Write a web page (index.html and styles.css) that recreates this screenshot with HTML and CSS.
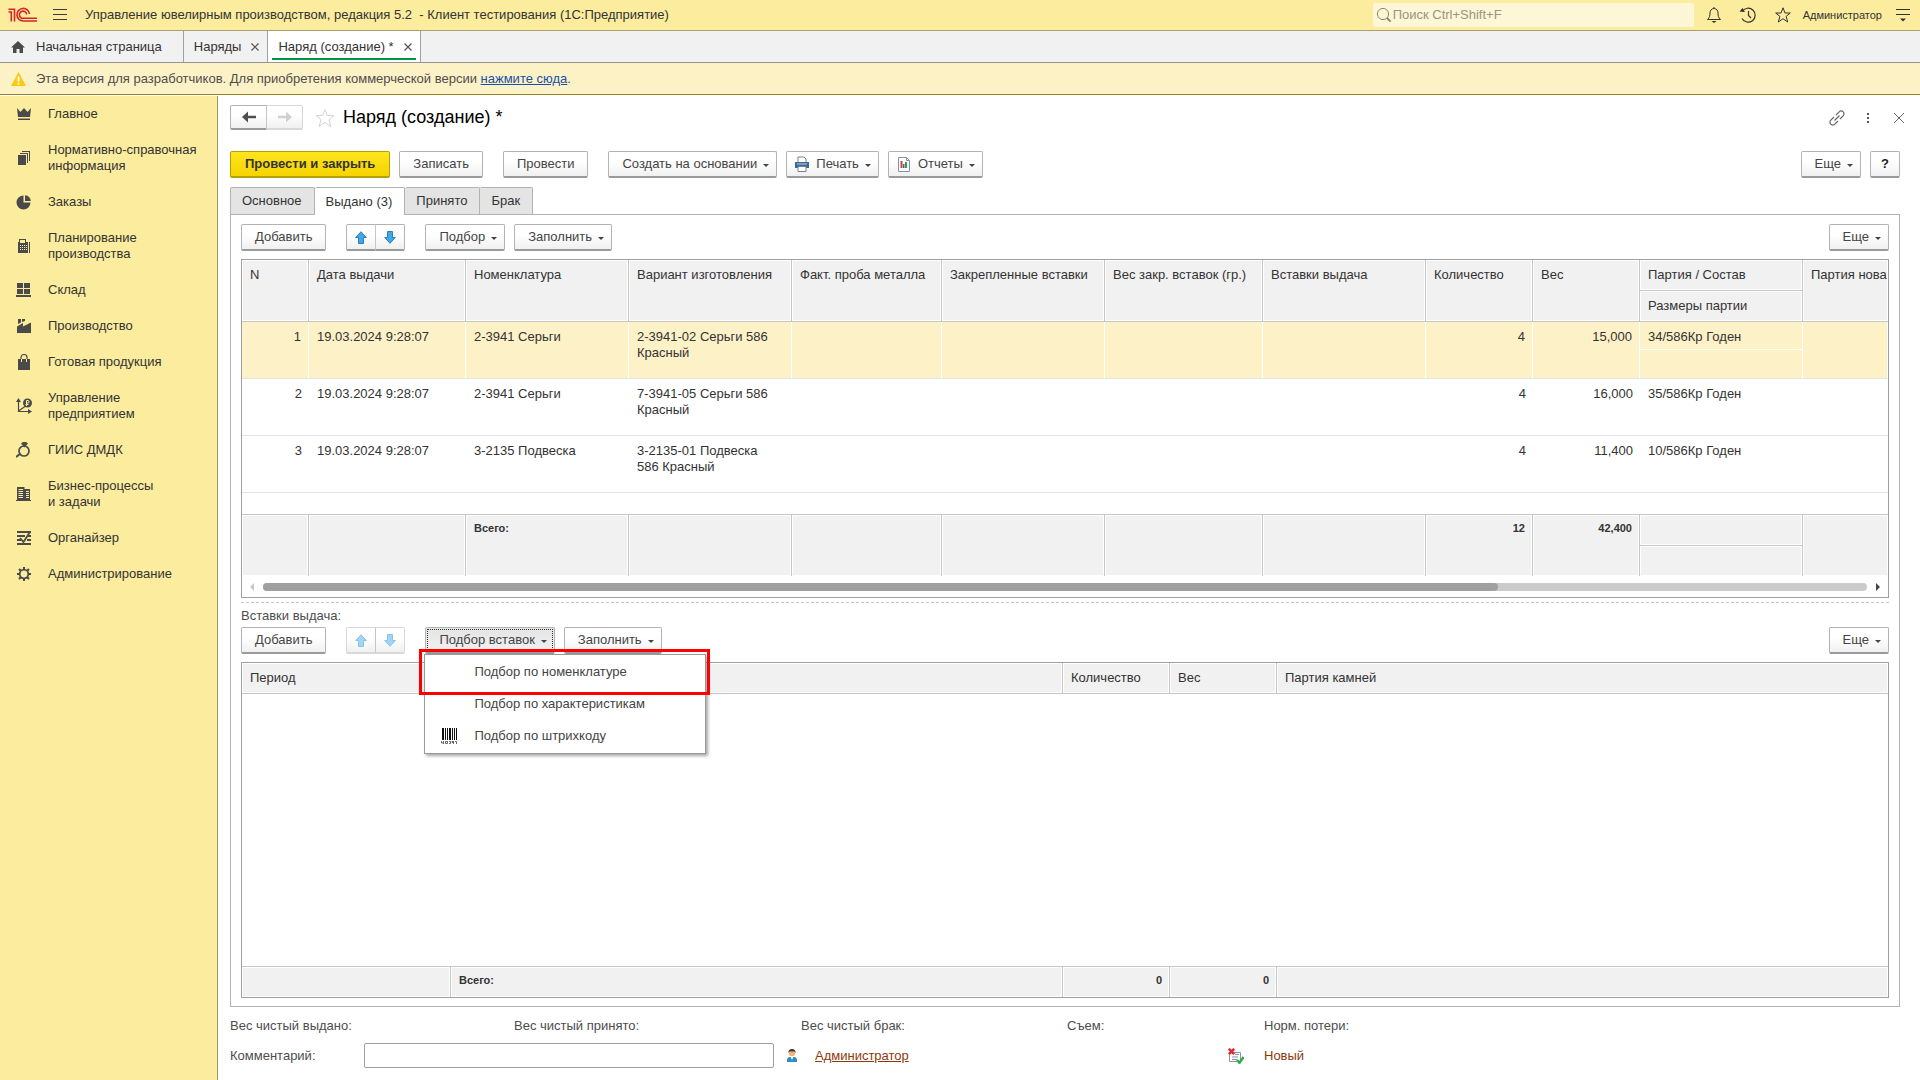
FILE: index.html
```html
<!DOCTYPE html>
<html lang="ru">
<head>
<meta charset="utf-8">
<title>Управление ювелирным производством, редакция 5.2</title>
<link rel="stylesheet" href="styles.css">
</head>
<body>
<header class="titlebar">
  <svg class="logo" width="30" height="16" viewBox="0 0 30 16" fill="none" stroke="#d8232a" stroke-width="1.6">
    <path d="M.5 5h2.800V14.500M.5 2.300h6V14.500" />
    <path d="M21.500 7A6.300 6.300 0 1 0 15.500 14H29" />
    <path d="M18.600 7.500A3.600 3.600 0 1 0 15.500 11.300H29" />
  </svg>
  <button class="icon-btn burger" type="button" aria-label="Меню">
    <svg width="14" height="12" viewBox="0 0 14 12" stroke="#3b3b3b" stroke-width="1"><path d="M0 .5h14M0 5.500h14M0 10.500h14"/></svg>
  </button>
  <h1 class="app-title">Управление ювелирным производством, редакция 5.2 &nbsp;- Клиент тестирования (1С:Предприятие)</h1>
  <label class="search">
    <svg width="16" height="16" viewBox="0 0 16 16" fill="none" stroke="#8d8870"><circle cx="7" cy="7" r="5.6"/><path d="M11 11l3.600 3.600" stroke-width="2"/></svg>
    <input type="text" placeholder="Поиск Ctrl+Shift+F" aria-label="Поиск">
  </label>
  <div class="title-tools">
    <button class="icon-btn" type="button" aria-label="Уведомления">
      <svg width="16" height="18" viewBox="0 0 16 18" fill="none" stroke="#333"><path d="M1.500 13.500c2-2 2.500-3.500 2.500-6.500 0-2.500 1.500-4.500 4-4.500s4 2 4 4.500c0 3 .5 4.500 2.500 6.500zM8 2.500V1"/><path d="M5.500 15h5L8 17z" fill="#333" stroke="none"/></svg>
    </button>
    <button class="icon-btn" type="button" aria-label="История">
      <svg width="18" height="18" viewBox="0 0 18 18" fill="none" stroke="#333"><path d="M3.200 5.500A7 7 0 1 1 3 12.500" stroke-width="1.200"/><path d="M9.500 5v4.500l2.500 2.500" stroke-width="1.200"/><path d="M.5 5.500l5.500.500L3.500 2z" fill="#333" stroke="none"/></svg>
    </button>
    <button class="icon-btn" type="button" aria-label="Избранное">
      <svg width="18" height="18" viewBox="0 0 18 18" fill="none" stroke="#333"><path d="M9 1.800l2 5.200h5.300l-4.200 3.400 1.600 5.600L9 12.700 4.300 16l1.600-5.600L1.700 7H7z"/></svg>
    </button>
    <a class="user" href="#">Администратор</a>
    <button class="icon-btn" type="button" aria-label="Настройки">
      <svg width="16" height="14" viewBox="0 0 16 14" stroke="#333"><path d="M1 1.500h14M1 6.500h14"/><path d="M5 10.500h6L8 13.500z" fill="#333" stroke="none"/></svg>
    </button>
  </div>
</header>

<nav class="tabs">
  <a class="tab tab-home" href="#">
    <svg width="16" height="14" viewBox="0 0 16 14" fill="#4a4a4a"><path d="M8 1l7 6.500h-2V13H9.500V9h-3v4H3V7.500H1z"/></svg>
    Начальная страница</a>
  <a class="tab" href="#">Наряды <svg class="x" width="8" height="8" viewBox="0 0 8 8" stroke="#555" stroke-width="1.200"><path d="M.5.5l7 7M7.500.5l-7 7"/></svg></a>
  <a class="tab tab-active" href="#">Наряд (создание) * <svg class="x" width="8" height="8" viewBox="0 0 8 8" stroke="#555" stroke-width="1.200"><path d="M.5.5l7 7M7.500.5l-7 7"/></svg></a>
</nav>

<div class="banner">
  <svg width="15" height="14" viewBox="0 0 15 14"><path d="M7.500 0L15 14H0z" fill="#fbc814"/><path d="M7.500 4.500v5M7.500 10.800v1.700" stroke="#fff" stroke-width="1.800"/></svg>
  <p>Эта версия для разработчиков. Для приобретения коммерческой версии <a href="#">нажмите сюда</a>.</p>
</div>

<div class="workspace">
  <nav class="sidebar">
    <a href="#"><svg width="16" height="16" viewBox="0 0 16 16"><path d="M1 2l3.500 4L8 2l3.500 4L15 2l-1 9H2zM2 12.500h12v1.500H2z"/></svg><span>Главное</span></a>
    <a href="#"><svg width="16" height="16" viewBox="0 0 16 16"><path d="M2 5h8v10H2zM4 3h8v10h-1V4H4zM6 1h8v10h-1V2H6z"/></svg><span>Нормативно-справочная информация</span></a>
    <a href="#"><svg width="16" height="16" viewBox="0 0 16 16"><path d="M7.500 1.500V8.500H14.500A7 7 0 1 1 7.500 1.500zM9 1.200A6.500 6.500 0 0 1 14.800 7H9z"/></svg><span>Заказы</span></a>
    <a href="#"><svg width="16" height="16" viewBox="0 0 16 16"><path fill-rule="evenodd" d="M3 1h7v3h2v11H2V4h1zM4 2v3h5V2zM4 7v1h1V7zM6 7v1h1V7zM8 7v1h1V7zM4 9v1h1V9zM6 9v1h1V9zM8 9v1h1V9zM4 11v1h1v-1zM6 11v1h1v-1zM8 11v1h1v-1zM10 7v1h1V7zM10 9v1h1V9zM10 11v1h1v-1zM13 4h1v11h-1z"/></svg><span>Планирование производства</span></a>
    <a href="#"><svg width="16" height="16" viewBox="0 0 16 16"><path d="M1 1h6v5H1zM8 1h6v5H8zM1 7h6v5H1zM8 7h6v5H8zM0 13h15v2H0z"/></svg><span>Склад</span></a>
    <a href="#"><svg width="16" height="16" viewBox="0 0 16 16"><path d="M1 15V8.500L7 5v3.500L15 4.500V15zM2 1h3v3.500L2 6zM6 1h3v2L6 4z"/></svg><span>Производство</span></a>
    <a href="#"><svg width="16" height="16" viewBox="0 0 16 16"><path d="M2 5h12v11H2z"/><path d="M5 8V3.500a3 3 0 0 1 6 0V8" fill="none" stroke="#4a4a4a" stroke-width="1.200"/><path d="M5.500 5v3M10.500 5v3" stroke="#fbec9e"/></svg><span>Готовая продукция</span></a>
    <a href="#"><svg width="16" height="16" viewBox="0 0 16 16"><path d="M0 4l2.500-4L5 4zM12 11l4 2.500-4 2.500z"/><path d="M2.500 2v11.500H14M2.500 13L9 8.500" fill="none" stroke="#4a4a4a" stroke-width="1.200"/><circle cx="11.500" cy="5" r="4.500"/><path d="M10.500 2.500h1.500c1.500 0 1.500 2.500 0 2.500h-1.500zM10.500 8V5M9.500 6.500h3" fill="none" stroke="#fbec9e"/></svg><span>Управление предприятием</span></a>
    <a href="#"><svg width="16" height="16" viewBox="0 0 16 16"><circle cx="8" cy="9" r="5" fill="none" stroke="#4a4a4a" stroke-width="1.700"/><path d="M5 1.500L7 0h3l2 1.500L8.500 5.500z"/><path d="M0 15l4-3" stroke="#4a4a4a" stroke-width="2"/></svg><span>ГИИС ДМДК</span></a>
    <a href="#"><svg width="16" height="16" viewBox="0 0 16 16"><path fill-rule="evenodd" d="M1 14V1h7.500v2H14v11h1v1H0v-1zM2.500 3v1h4.500V3zM2.500 5v1h4.500V5zM2.500 7v1h4.500V7zM2.500 9v1h4.500V9zM2.500 11v1h4.500v-1zM10 5v1h3V5zM10 7v1h3V7zM10 9v1h3V9zM10 11v1h3v-1z"/></svg><span>Бизнес-процессы и&nbsp;задачи</span></a>
    <a href="#"><svg width="16" height="16" viewBox="0 0 16 16"><path d="M1 1h14v2H1zM1 5h8v2H1zM12 5h3v2h-3zM1 9h4v2H1zM11 9h4v2h-4zM1 13h14v2H1z"/><path d="M4 8l3.500 4L14 2" fill="none" stroke="#4a4a4a" stroke-width="1.800"/></svg><span>Органайзер</span></a>
    <a href="#"><svg width="16" height="16" viewBox="0 0 16 16"><circle cx="8" cy="8" r="4.300" fill="none" stroke="#4a4a4a" stroke-width="1.800"/><path d="M8 1v3M8 12v3M1 8h3M12 8h3M3 3l2 2M11 11l2 2M13 3l-2 2M5 11l-2 2" stroke="#4a4a4a" stroke-width="2"/></svg><span>Администрирование</span></a>
  </nav>

  <main class="form">
    <div class="form-head">
      <div class="pair">
        <button class="btn btn-nav" type="button" aria-label="Назад"><svg width="14" height="12" viewBox="0 0 14 12" fill="#4f4f4f"><path d="M0 6l6-5.500V4.800h8v2.400H6v4.300z"/></svg></button>
        <button class="btn btn-nav" type="button" aria-label="Вперед" disabled><svg width="14" height="12" viewBox="0 0 14 12" fill="#d0d0d0"><path d="M14 6L8 .5V4.800H0v2.400h8v4.300z"/></svg></button>
      </div>
      <svg class="fav" width="20" height="20" viewBox="0 0 20 20" fill="none" stroke="#d4d4d4"><path d="M10 1.500l2.300 6H19l-5 4.200 1.800 6.800-5.800-4-5.800 4L6 11.700 1 7.500h6.700z"/></svg>
      <h2>Наряд (создание) *</h2>
      <div class="form-tools">
        <button class="icon-btn" type="button" aria-label="Ссылка"><svg width="16" height="16" viewBox="0 0 16 16" fill="none" stroke="#666" stroke-width="1.200"><path d="M7 5l3.200-3.200a2.700 2.700 0 0 1 4 4L11 9M9 11l-3.200 3.200a2.700 2.700 0 0 1-4-4L5 7M5.500 10.500l5-5"/></svg></button>
        <button class="icon-btn" type="button" aria-label="Ещё"><svg width="16" height="16" viewBox="0 0 16 16" fill="#555"><path d="M7 3h2v2H7zM7 7h2v2H7zM7 11h2v2H7z"/></svg></button>
        <button class="icon-btn" type="button" aria-label="Закрыть"><svg width="16" height="16" viewBox="0 0 16 16" stroke="#666"><path d="M3 3l10 10M13 3L3 13"/></svg></button>
      </div>
    </div>

    <div class="toolbar toolbar-main">
      <div class="group">
        <button class="btn btn-primary" type="button">Провести и закрыть</button>
        <button class="btn" type="button">Записать</button>
      </div>
      <button class="btn" type="button">Провести</button>
      <div class="group">
        <button class="btn drop" type="button">Создать на основании</button>
        <button class="btn drop btn-icon" type="button"><svg width="16" height="16" viewBox="0 0 16 16"><path d="M4 6V1h6l2 2v3" fill="#fff" stroke="#6f8296"/><path d="M1 6h14v6H1z" fill="#3c6892"/><path d="M3 8h10" stroke="#bcd0e3"/><path d="M4 10.500h8v5H4z" fill="#fff" stroke="#6f8296"/></svg>Печать</button>
        <button class="btn drop btn-icon" type="button"><svg width="16" height="16" viewBox="0 0 16 16"><path d="M2.500 1.500h8l3 3v11h-11z" fill="#fff" stroke="#8392a5"/><path d="M10.500 1.500v3h3" fill="none" stroke="#8392a5"/><path d="M4.500 5h2v7h-2z" fill="#e23c31"/><path d="M7 8h1.500v4H7z" fill="#3567a8"/><path d="M9 6h2v6H9z" fill="#35a043"/></svg>Отчеты</button>
      </div>
      <div class="group push">
        <button class="btn drop" type="button">Еще</button>
        <button class="btn btn-help" type="button">?</button>
      </div>
    </div>

    <div class="page-tabs" role="tablist">
      <button type="button" role="tab">Основное</button>
      <button type="button" role="tab" class="on" aria-selected="true">Выдано (3)</button>
      <button type="button" role="tab">Принято</button>
      <button type="button" role="tab">Брак</button>
    </div>

    <section class="panel">
      <div class="toolbar">
        <button class="btn" type="button">Добавить</button>
        <div class="pair">
          <button class="btn btn-arrow" type="button" aria-label="Вверх"><svg width="12" height="13" viewBox="0 0 12 13"><path d="M6 .7L11.300 6.500H8.500v6h-5v-6H.7z" fill="#3fa9e8" stroke="#2a7fb5"/></svg></button>
          <button class="btn btn-arrow" type="button" aria-label="Вниз"><svg width="12" height="13" viewBox="0 0 12 13"><path d="M6 12.300L.7 6.500h2.800v-6h5v6h2.800z" fill="#3fa9e8" stroke="#2a7fb5"/></svg></button>
        </div>
        <div class="group">
          <button class="btn drop" type="button">Подбор</button>
          <button class="btn drop" type="button">Заполнить</button>
        </div>
        <div class="group push"><button class="btn drop" type="button">Еще</button></div>
      </div>

      <div class="grid-box">
        <table class="grid issued">
          <colgroup><col class="c-n"><col class="c-date"><col class="c-item"><col class="c-item"><col class="c-probe"><col class="c-item"><col class="c-weight"><col class="c-item"><col class="c-num"><col class="c-num"><col class="c-item"><col></colgroup>
          <thead>
            <tr><th rowspan="2">N</th><th rowspan="2">Дата выдачи</th><th rowspan="2">Номенклатура</th><th rowspan="2">Вариант изготовления</th><th rowspan="2">Факт. проба металла</th><th rowspan="2">Закрепленные вставки</th><th rowspan="2">Вес закр. вставок (гр.)</th><th rowspan="2">Вставки выдача</th><th rowspan="2">Количество</th><th rowspan="2">Вес</th><th>Партия / Состав</th><th rowspan="2">Партия нова</th></tr>
            <tr><th>Размеры партии</th></tr>
          </thead>
          <tbody>
            <tr class="sel half"><td rowspan="2" class="num">1</td><td rowspan="2">19.03.2024 9:28:07</td><td rowspan="2">2-3941 Серьги</td><td rowspan="2">2-3941-02 Серьги 586 Красный</td><td rowspan="2"></td><td rowspan="2"></td><td rowspan="2"></td><td rowspan="2"></td><td rowspan="2" class="num">4</td><td rowspan="2" class="num">15,000</td><td class="split">34/586Кр Годен</td><td rowspan="2"></td></tr>
            <tr class="sel half"><td></td></tr>
            <tr><td class="num">2</td><td>19.03.2024 9:28:07</td><td>2-3941 Серьги</td><td>7-3941-05 Серьги 586 Красный</td><td></td><td></td><td></td><td></td><td class="num">4</td><td class="num">16,000</td><td>35/586Кр Годен</td><td></td></tr>
            <tr><td class="num">3</td><td>19.03.2024 9:28:07</td><td>3-2135 Подвеска</td><td>3-2135-01 Подвеска 586&nbsp;Красный</td><td></td><td></td><td></td><td></td><td class="num">4</td><td class="num">11,400</td><td>10/586Кр Годен</td><td></td></tr>
            <tr class="rest"><td colspan="12"></td></tr>
          </tbody>
          <tfoot>
            <tr><td rowspan="2"></td><td rowspan="2"></td><td rowspan="2">Всего:</td><td rowspan="2"></td><td rowspan="2"></td><td rowspan="2"></td><td rowspan="2"></td><td rowspan="2"></td><td rowspan="2" class="num">12</td><td rowspan="2" class="num">42,400</td><td></td><td rowspan="2"></td></tr>
            <tr><td></td></tr>
          </tfoot>
        </table>
        <div class="hscroll">
          <svg width="4" height="8" viewBox="0 0 4 8" fill="#c8c8c8"><path d="M4 0v8L0 4z"/></svg>
          <div class="track"><div class="thumb"></div></div>
          <svg width="4" height="8" viewBox="0 0 4 8" fill="#444"><path d="M0 0v8l4-4z"/></svg>
        </div>
      </div>

      <div class="splitter"></div>
      <h3 class="caption">Вставки выдача:</h3>

      <div class="toolbar">
        <button class="btn" type="button">Добавить</button>
        <div class="pair">
          <button class="btn btn-arrow" type="button" aria-label="Вверх" disabled><svg width="12" height="13" viewBox="0 0 12 13"><path d="M6 .7L11.300 6.500H8.500v6h-5v-6H.7z" fill="#9fd6f5" stroke="#8cc3e2"/></svg></button>
          <button class="btn btn-arrow" type="button" aria-label="Вниз" disabled><svg width="12" height="13" viewBox="0 0 12 13"><path d="M6 12.300L.7 6.500h2.800v-6h5v6h2.800z" fill="#9fd6f5" stroke="#8cc3e2"/></svg></button>
        </div>
        <div class="group">
          <div class="menu-host">
            <button class="btn drop pressed" type="button" aria-haspopup="menu" aria-expanded="true">Подбор вставок</button>
            <div class="menu" role="menu">
              <button type="button" role="menuitem"><span class="menu-icon"></span>Подбор по номенклатуре</button>
              <button type="button" role="menuitem"><span class="menu-icon"></span>Подбор по характеристикам</button>
              <button type="button" role="menuitem"><span class="menu-icon"><svg width="16" height="16" viewBox="0 0 16 16"><path d="M1 0h2v12H1zM4 0h1v12H4zM6 0h1v12H6zM8 0h2v12H8zM11 0h1v12h-1zM13 0h1v12h-1zM15 0h1v12h-1z" fill="#111"/><path d="M.5 13v2h1.500M2.500 13v3M4.500 13.500h2v2h-2zM8 13.500h1.500v2H8M11 13.500h1.500v1H11zM12.500 13.500v2.500M14 13.500h1.500V16" fill="none" stroke="#444" stroke-width=".8"/></svg></span>Подбор по штрихкоду</button>
            </div>
            <div class="marker"></div>
          </div>
          <button class="btn drop" type="button">Заполнить</button>
        </div>
        <div class="group push"><button class="btn drop" type="button">Еще</button></div>
      </div>

      <div class="grid-box grow">
        <table class="grid inserts">
          <colgroup><col class="c-period"><col><col class="c-num"><col class="c-num"><col class="c-stones"></colgroup>
          <thead><tr><th class="joined">Период</th><th></th><th>Количество</th><th>Вес</th><th>Партия камней</th></tr></thead>
          <tbody><tr class="rest"><td colspan="5"></td></tr></tbody>
          <tfoot><tr><td></td><td>Всего:</td><td class="num">0</td><td class="num">0</td><td></td></tr></tfoot>
        </table>
      </div>
    </section>

    <footer class="summary">
      <div class="totals"><span>Вес чистый выдано:</span><span>Вес чистый принято:</span><span>Вес чистый брак:</span><span>Съем:</span><span>Норм. потери:</span></div>
      <div class="comment-row">
        <label for="comment">Комментарий:</label>
        <input id="comment" type="text">
        <svg class="person" width="10" height="13" viewBox="0 0 10 13"><path d="M0 13V10l2-2h6l2 2v3z" fill="#2f8fc4"/><path d="M3.500 7.500h3L5 11z" fill="#fff"/><circle cx="5" cy="4" r="3.200" fill="#efb67a"/><path d="M1.500 4C1 1.500 3 0 5 0s4 1.500 3.500 4L7.500 2.500h-5z" fill="#4a3c2c"/></svg>
        <a class="author" href="#">Администратор</a>
        <svg class="state-icon" width="16" height="16" viewBox="0 0 16 16"><path d="M2.500 4.500h10v9h-11v-7" fill="#fff" stroke="#8494ab"/><path d="M7 6.500h4M4 9h6M4 11.500h5" stroke="#8494ab"/><path d="M.8.8l5.400 5.400M6.200.8L.8 6.200" stroke="#dc2b2b" stroke-width="2.600"/><path d="M9 12l2.500 2.800 4-5.800" fill="none" stroke="#2fae3f" stroke-width="2.400"/></svg>
        <span class="state">Новый</span>
      </div>
    </footer>
  </main>
</div>
</body>
</html>
```
FILE: styles.css
```css
* { box-sizing: border-box; }

body {
  margin: 0;
  min-height: 100vh;
  display: flex;
  flex-direction: column;
  background: #fff;
  color: #333;
  font: 13px/16px "Liberation Sans", Arial, sans-serif;
}

button, input { font: inherit; color: inherit; }
h1, h2, h3, p { margin: 0; font-weight: normal; }
svg { display: block; flex: none; }
a { color: inherit; text-decoration: none; }

.icon-btn {
  display: flex;
  padding: 0;
  border: 0;
  background: none;
}

/* Title bar */
.titlebar {
  display: flex;
  align-items: center;
  height: 31px;
  padding: 0 9px 0 8px;
  background: #fbec9e;
  border-bottom: 1px solid #a9a069;
}
.burger { margin: 0 18px 0 15px; }
.app-title { font-size: 13px; white-space: nowrap; }
.search {
  display: flex;
  align-items: center;
  gap: 1px;
  width: 321px;
  height: 24px;
  margin: 0 12px 0 auto;
  padding: 0 3px;
  border-radius: 2px;
  background: #fdf7d7;
}
.search input {
  flex: 1;
  min-width: 0;
  padding: 0;
  border: 0;
  background: none;
  outline: none;
}
.search input::placeholder { color: #9a957c; opacity: 1; }
.title-tools { display: flex; align-items: center; gap: 17px; }
.user { font-size: 11px; margin: 0 -4px 0 -6px; }

/* Window tabs */
.tabs {
  display: flex;
  height: 32px;
  background: #f1f1f1;
  border-bottom: 1px solid #959595;
}
.tab {
  display: flex;
  align-items: center;
  gap: 10px;
  padding: 0 8px 0 10px;
  border-right: 1px solid #a0a0a0;
  white-space: nowrap;
}
.tab-home { padding-right: 21px; }
.tab-active {
  background: linear-gradient(#009646, #009646) 4px 27px / calc(100% - 8px) 2px no-repeat #fff;
}

.banner {
  display: flex;
  align-items: center;
  gap: 10px;
  height: 32px;
  padding: 0 11px;
  background: #fdf2c6;
  border-bottom: 1px solid #99801f;
  color: #4d4d4d;
}
.banner a { color: #1a4fa8; text-decoration: underline; }

/* Section list */
.workspace { flex: 1; display: flex; }
.sidebar {
  width: 218px;
  flex: none;
  margin-top: 1px;
  background: #fbec9e;
  border-right: 1px solid #9b9468;
}
.sidebar a {
  display: flex;
  align-items: center;
  gap: 16px;
  padding: 10px 0 10px 16px;
}
.sidebar svg { fill: #4a4a4a; }
.sidebar span { max-width: 156px; }

/* Form */
.form {
  flex: 1;
  min-width: 0;
  display: flex;
  flex-direction: column;
  padding: 10px 20px 12px 12px;
}
.form-head { display: flex; align-items: center; height: 25px; }
.fav { margin: 0 8px 0 12px; }
.form-head h2 { font-size: 18px; line-height: 22px; padding-bottom: 2px; color: #000; }
.form-tools { display: flex; gap: 15px; margin: 0 -7px 0 auto; }

.btn {
  display: inline-flex;
  align-items: center;
  justify-content: center;
  height: 27px;
  padding: 0 13px;
  border: 1px solid #b3b3b3;
  border-bottom: 2px solid #9a9a9a;
  border-radius: 2px;
  background: linear-gradient(#fff 40%, #f0f0f0);
  color: #444;
  white-space: nowrap;
}
.btn:disabled { border-color: #d8d8d8; }
.btn-primary {
  padding: 0 14px;
  background: linear-gradient(#ffe51e, #f5d400);
  border-color: #b89f00;
  color: #333;
  font-weight: bold;
}
.btn-nav { width: 37px; height: 25px; padding: 0; }
.btn-arrow { width: 30px; padding: 0; }
.btn-help { width: 30px; padding: 0; color: #222; font-weight: bold; }
.drop { padding-right: 7px; }
.btn-icon { padding-left: 7px; }
.btn-icon svg { margin-right: 6px; }
.drop::after {
  content: "";
  margin: 3px 0 0 6px;
  border: 3px solid transparent;
  border-top-color: #444;
  border-bottom: 0;
}
.pressed {
  background: linear-gradient(#e4e4e4, #f2f2f2);
  outline: 1px dotted #333;
  outline-offset: -3px;
}
.pair { display: flex; }
.pair .btn + .btn { margin-left: -1px; border-left-color: #c6c6c6; border-radius: 0 2px 2px 0; }
.pair .btn:first-child { border-radius: 2px 0 0 2px; }

.toolbar { display: flex; gap: 20px; }
.toolbar-main { margin: 21px 0 9px; }
.group { display: flex; gap: 9px; }
.push { margin-left: auto; }

.page-tabs { display: flex; }
.page-tabs button {
  height: 27px;
  padding: 0 12px 0 11px;
  border: 1px solid #b3b3b3;
  border-width: 1px 1px 0 0;
  border-radius: 2px 2px 0 0;
  background: #e4e4e4;
}
.page-tabs button:first-child { border-left-width: 1px; }
.page-tabs .on { position: relative; height: 28px; margin-bottom: -1px; background: #fff; }

.panel {
  flex: 1;
  display: flex;
  flex-direction: column;
  padding: 9px 10px 8px;
  border: 1px solid #b3b3b3;
}

/* Tables */
.grid-box {
  margin-top: 8px;
  border: 1px solid #a0a0a0;
  overflow: hidden;
}
.grow { flex: 1; display: grid; }
.grid {
  width: 100%;
  table-layout: fixed;
  border-collapse: separate;
  border-spacing: 0;
}
.c-n { width: 67px; }
.c-date { width: 157px; }
.c-item { width: 163px; }
.c-probe { width: 150px; }
.c-weight { width: 158px; }
.c-num { width: 107px; }
.c-period { width: 209px; }
.c-stones { width: 611px; }

.grid th, .grid td {
  padding: 7px 7px 0 8px;
  text-align: left;
  vertical-align: top;
  font-weight: normal;
  overflow: hidden;
}
.grid th, .grid tfoot td {
  height: 31px;
  background: #f1f1f1;
  border: 0 solid #c6c6c6;
  border-width: 0 1px 1px 0;
  box-shadow: inset 0 0 0 1px #fff;
  white-space: nowrap;
}
.grid tfoot td {
  padding-top: 5px;
  border-width: 1px 1px 0 0;
  font-size: 11px;
  font-weight: bold;
}
.grid th:last-child, .grid tfoot td:last-child { border-right: 0; }
.grid th:last-child { padding-right: 0; }
.issued thead tr:nth-child(2) th:last-child,
.issued tfoot tr:nth-child(2) td:last-child { border-right: 1px solid #c6c6c6; }
.grid tbody td { height: 57px; border-bottom: 1px solid #e2e2e2; }
.grid .half td { height: 28px; }
.grid .half + .half td { height: 29px; }
.sel td { background: #fdf1c8; border-right: 1px solid #fff; }
.grid .sel .split { border-bottom-color: #fff; }
.grid .num { text-align: right; }
.grid .rest td { height: 21px; padding: 0; border: 0; }
.inserts { height: 100%; }
.grid .joined { border-right-color: #f1f1f1; }

.hscroll {
  display: flex;
  align-items: center;
  gap: 9px;
  height: 21px;
  padding: 0 8px;
}
.track { flex: 1; height: 8px; border-radius: 4px; background: #cbcbcb; }
.thumb { width: 77%; height: 8px; border-radius: 4px; background: #a0a0a0; }

.splitter { margin: 4px 0 5px; border-top: 1px dashed #c6c6c6; }
.caption { margin: 0 0 3px; font-size: 13px; color: #4d4d4d; }

/* Drop-down menu */
.menu-host { position: relative; display: flex; }
.menu {
  position: absolute;
  z-index: 1;
  top: 100%;
  left: -1px;
  width: 282px;
  padding: 1px 0;
  border: 1px solid #999;
  background: #fff;
  box-shadow: 2px 2px 3px rgba(0, 0, 0, .35);
}
.menu button {
  display: flex;
  align-items: center;
  width: 100%;
  height: 32px;
  padding: 0 16px;
  border: 0;
  background: none;
  color: #444;
}
.menu-icon { width: 33px; }
.marker {
  position: absolute;
  z-index: 2;
  top: 22px;
  left: -6px;
  width: 291px;
  height: 46px;
  border: 3px solid #f00;
}

/* Summary */
.summary { padding-top: 11px; color: #4d4d4d; }
.totals { display: grid; grid-template-columns: 284px 287px 266px 197px auto; }
.comment-row {
  display: grid;
  grid-template-columns: 134px 410px 41px 413px 36px auto;
  align-items: center;
  margin-top: 9px;
}
.comment-row input {
  height: 25px;
  border: 1px solid #a0a0a0;
  border-radius: 2px;
  background: #fff;
}
.comment-row .person { margin-left: 13px; }
.author { justify-self: start; text-decoration: underline; }
.author, .state { color: #8b3a0e; }
```
